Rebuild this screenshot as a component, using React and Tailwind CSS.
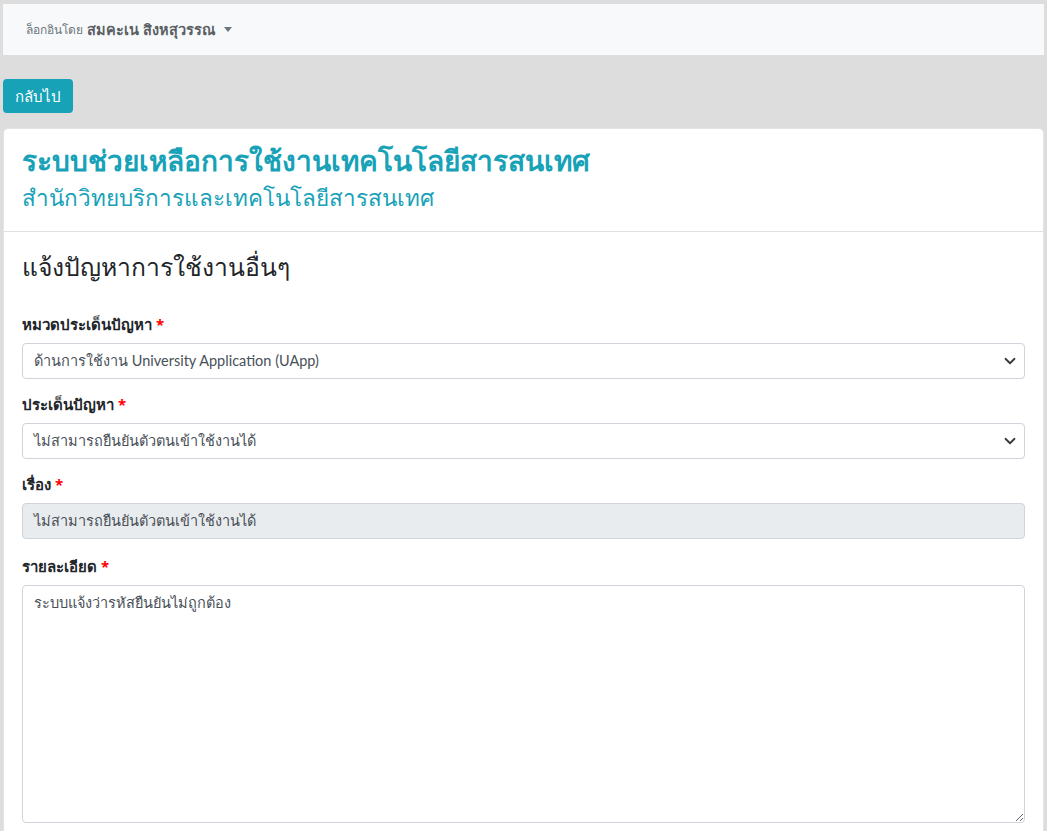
import React from "react";

function Chevron() {
  return (
    <svg width="12" height="12" viewBox="0 0 16 16" className="text-[#343a40]">
      <path d="M2 5l6 6 6-6" fill="none" stroke="currentColor" strokeWidth="2.4" strokeLinecap="round" strokeLinejoin="round" />
    </svg>
  );
}

function Req() {
  return <span className="text-[#ff0000] ml-1">*</span>;
}

function SelectBox({ text }) {
  return (
    <div className="h-[36px] border border-[#ced4da] rounded-[4px] bg-white flex items-center justify-between pl-[11px] pr-[8px] text-[14.5px] text-[#495057] font-['Lato','Noto_Sans',sans-serif]">
      <span>{text}</span>
      <Chevron />
    </div>
  );
}

export default function App() {
  return (
    <div className="min-h-screen bg-[#dddddd] px-[3px] pt-[4px] font-['Noto_Sans','Open_Sans',sans-serif] text-[#212529]">
      <nav className="h-[51px] bg-[#f8f9fa] flex items-center pl-[23px]">
        <span className="text-[12px] text-[#6c757d]">ล็อกอินโดย</span>
        <span className="ml-[4px] text-[14.5px] font-semibold text-[#5a5f64]">สมคะเน สิงหสุวรรณ</span>
        <span className="ml-[9px] w-0 h-0 border-l-[4px] border-r-[4px] border-t-[5px] border-l-transparent border-r-transparent border-t-[#6c757d]" />
      </nav>

      <div className="mt-[24px]">
        <button className="h-[34px] px-[12px] rounded-[4px] bg-[#17a2b8] text-white text-[15px]">กลับไป</button>
      </div>

      <div className="mt-[15px] bg-white rounded-t-[5px] border border-[#e3e3e3]">
        <div className="h-[103px] border-b border-[#dee2e6] pl-[18px] pt-[12px]">
          <div className="text-[28px] leading-[38px] font-semibold text-[#17a2b8]">ระบบช่วยเหลือการใช้งานเทคโนโลยีสารสนเทศ</div>
          <div className="mt-[3px] text-[22.5px] leading-[32px] text-[#17a2b8]">สำนักวิทยบริการและเทคโนโลยีสารสนเทศ</div>
        </div>
        <div className="px-[18px] pt-[18px] pb-[8px]">
          <h2 className="text-[24.7px] leading-[34px] text-[#212529]">แจ้งปัญหาการใช้งานอื่นๆ</h2>

          <div className="mt-[29px]">
            <label className="block text-[15px] leading-[22px] font-bold mb-[8px]">หมวดประเด็นปัญหา<Req /></label>
            <SelectBox text="ด้านการใช้งาน University Application (UApp)" />
          </div>

          <div className="mt-[14px]">
            <label className="block text-[15px] leading-[22px] font-bold mb-[8px]">ประเด็นปัญหา<Req /></label>
            <SelectBox text="ไม่สามารถยืนยันตัวตนเข้าใช้งานได้" />
          </div>

          <div className="mt-[14px]">
            <label className="block text-[15px] leading-[22px] font-bold mb-[8px]">เรื่อง<Req /></label>
            <div className="h-[36px] border border-[#ced4da] rounded-[4px] bg-[#e9ecef] flex items-center pl-[11px] text-[14.5px] text-[#495057]">ไม่สามารถยืนยันตัวตนเข้าใช้งานได้</div>
          </div>

          <div className="mt-[16px]">
            <label className="block text-[15px] leading-[22px] font-bold mb-[8px]">รายละเอียด<Req /></label>
            <textarea
              readOnly
              defaultValue="ระบบแจ้งว่ารหัสยืนยันไม่ถูกต้อง"
              className="block w-full h-[238px] border border-[#ced4da] rounded-[4px] bg-white px-[11px] py-[6px] text-[14.5px] text-[#495057] resize-y outline-none"
            />
          </div>
        </div>
      </div>
    </div>
  );
}
